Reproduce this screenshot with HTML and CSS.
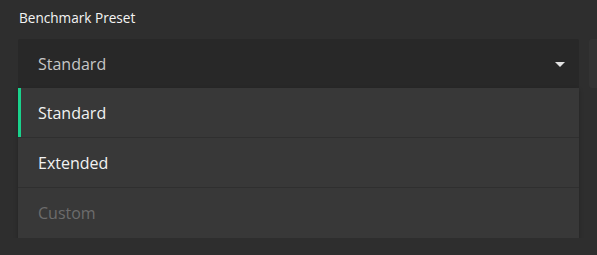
FILE: index.html
```html
<!DOCTYPE html>
<html lang="en">
<head>
    <meta charset="UTF-8">
    <title>Benchmark Preset</title>
    <link rel="stylesheet" href="styles.css">
</head>
<body>
    <div class="settings-row">
        <!-- Preset selector -->
        <div class="field">
            <div class="field-label">Benchmark Preset</div>
            <div class="select">
                <div class="select-box">
                    <span class="select-value">Standard</span>
                    <svg class="caret" width="10" height="5" viewBox="0 0 10 5"><path d="M0 0 H10 L5 5 Z" fill="#e2e2e2"/></svg>
                </div>
                <ul class="select-menu">
                    <li class="option active">Standard</li>
                    <li class="option">Extended</li>
                    <li class="option disabled">Custom</li>
                </ul>
            </div>
        </div>
        <!-- Next column peeking in at the edge -->
        <div class="side-card"></div>
    </div>
</body>
</html>
```

FILE: styles.css
```css
body {
    margin: 0;
    background-color: #2e2e2e;
    font-family: "Open Sans", "Noto Sans", Arial, sans-serif;
    color: #f4f4f4;
}
.settings-row {
    display: flex;
    gap: 10px;
    padding: 9px 0 0 18px;
}
.field {
    flex: 0 0 561px;
}
.field-label {
    font-size: 13.6px;
    line-height: 18px;
    margin-bottom: 12px;
    padding-left: 1px;
}
.select-box {
    display: flex;
    justify-content: space-between;
    align-items: center;
    height: 49px;
    padding: 0 14px 0 20px;
    background-color: #282828;
    border-radius: 2px 2px 0 0;
}
.select-value {
    font-size: 16px;
    color: #c6c6c6;
}
.caret {
    display: block;
    margin-top: 2px;
}
/* Open dropdown list */
.select-menu {
    margin: 0;
    padding: 0;
    list-style: none;
    background-color: #383838;
    box-shadow: 0 2px 4px rgba(0, 0, 0, 0.25);
}
.option {
    height: 49px;
    line-height: 50px;
    padding-left: 20px;
    font-size: 16px;
    color: #f2f2f2;
    border-bottom: 1px solid #2f2f2f;
}
.option:last-child {
    border-bottom: none;
    height: 50px;
}
.option.active {
    box-shadow: inset 3px 0 0 #1ad28c;
}
.option.disabled {
    color: #6c6c6c;
}
.side-card {
    flex: 0 0 20px;
    height: 49px;
    margin-top: 30px;
    background-color: #333333;
    border-radius: 3px;
}
```
